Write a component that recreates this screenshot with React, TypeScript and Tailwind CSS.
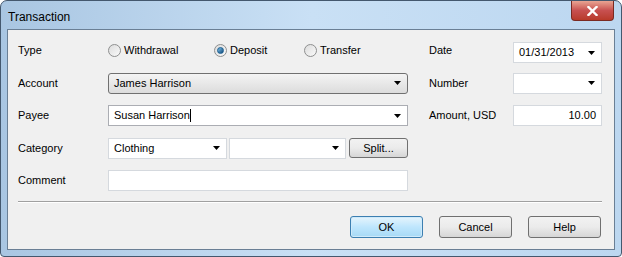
import React from 'react'

const font = { fontFamily: '"Liberation Sans", Arial, sans-serif' }

function Arrow() {
    return (
        <svg width="7" height="4" viewBox="0 0 7 4" className="shrink-0">
            <path d="M0 0h7L3.5 4z" fill="#000" />
        </svg>
    )
}

function Radio({ label, checked }: { label: string; checked?: boolean }) {
    return (
        <div className="flex items-center gap-[3px]">
            <span className="w-[13px] h-[13px] rounded-full border border-[#8e8f8f] bg-gradient-to-br from-[#dcdcdc] to-[#fafafa] flex items-center justify-center">
                {checked && <span className="w-[7px] h-[7px] rounded-full bg-gradient-to-br from-[#7fc3ec] to-[#0d4a7a] border border-[#1a5d8f]" />}
            </span>
            <span>{label}</span>
        </div>
    )
}

function Combo({ value, gray, caret, className = '' }: { value?: string; gray?: boolean; caret?: boolean; className?: string }) {
    return (
        <div
            className={`h-[21px] flex items-center justify-between pl-[5px] pr-[6px] ${
                gray
                    ? 'border border-[#707070] rounded-[3px] bg-gradient-to-b from-[#f4f4f4] to-[#dcdcdc]'
                    : 'border border-[#d5d9de] bg-white'
            } ${className}`}
        >
            <span className="flex items-center">
                {value}
                {caret && <span className="w-px h-[13px] bg-black" />}
            </span>
            <Arrow />
        </div>
    )
}

function Btn({ label, primary }: { label: string; primary?: boolean }) {
    return (
        <div
            className={`w-[73px] h-[22px] rounded-[3px] border flex items-center justify-center ${
                primary
                    ? 'border-[#3c7fb1] bg-gradient-to-b from-[#e6f4fc] via-[#bee6fd] to-[#a7d9f5] shadow-[inset_0_0_0_1px_#cfeafa]'
                    : 'border-[#707070] bg-gradient-to-b from-[#f2f2f2] via-[#ebebeb] to-[#d6d6d6]'
            }`}
        >
            {label}
        </div>
    )
}

export default function App() {
    return (
        <div className="w-[622px] h-[257px] bg-white text-[11px] text-black" style={font}>
            <div className="w-full h-full rounded-t-[7px] rounded-b-[4px] border border-[#44586e] bg-gradient-to-r from-[#a9c6e2] via-[#c9e0f5] to-[#bcd7f0] flex flex-col px-[6px] pb-[6px]">
                <div className="h-[28px] flex items-start justify-between">
                    <span className="text-[12px] pt-[7px] pl-[1px]">Transaction</span>
                    <div className="w-[43px] h-[20px] mr-[1px] rounded-b-[4px] border border-t-0 border-[#7a2a22] bg-gradient-to-b from-[#e8a493] via-[#c75050] to-[#b83a2a] flex items-center justify-center">
                        <svg width="11" height="10" viewBox="0 0 11 10">
                            <path d="M1.5 1l8 8M9.5 1l-8 8" stroke="#fff" strokeWidth="2.4" strokeLinecap="square" />
                        </svg>
                    </div>
                </div>
                <div className="flex-1 border border-[#6a7f95] bg-[#f0f0f0] pt-[10px] pl-[10px] pr-[11px]">
                    <div className="grid grid-cols-[90px_300px_21px_84px_89px] grid-rows-[21px_21px_21px_21px_21px] gap-y-[11.5px]">
                        <div className="flex items-center">Type</div>
                        <div className="flex items-center">
                            <div className="w-[106px]"><Radio label="Withdrawal" /></div>
                            <div className="w-[90px]"><Radio label="Deposit" checked /></div>
                            <Radio label="Transfer" />
                        </div>
                        <div />
                        <div className="flex items-center">Date</div>
                        <Combo value="01/31/2013" className="mt-[2px]" />

                        <div className="flex items-center">Account</div>
                        <Combo value="James Harrison" gray />
                        <div />
                        <div className="flex items-center">Number</div>
                        <Combo />

                        <div className="flex items-center">Payee</div>
                        <Combo value="Susan Harrison" caret className="!border-[#abadb3]" />
                        <div />
                        <div className="flex items-center">Amount, USD</div>
                        <div className="h-[21px] border border-[#d5d9de] bg-white flex items-center justify-end pr-[5px]">10.00</div>

                        <div className="flex items-center">Category</div>
                        <div className="flex items-center gap-[2px]">
                            <Combo value="Clothing" className="w-[119px]" />
                            <Combo className="w-[117px]" />
                            <div className="ml-[1px] w-[59px] h-[20px] rounded-[3px] border border-[#707070] bg-gradient-to-b from-[#f2f2f2] via-[#ebebeb] to-[#d6d6d6] flex items-center justify-center">Split...</div>
                        </div>
                        <div />
                        <div />
                        <div />

                        <div className="flex items-center">Comment</div>
                        <div className="h-[21px] border border-[#d5d9de] bg-white" />
                    </div>
                    <div className="mt-[10px] mr-[1px] h-[2px] border-t border-[#a0a0a0] border-b border-b-white" />
                    <div className="mt-[13px] flex justify-end gap-[16px] pr-[2px]">
                        <Btn label="OK" primary />
                        <Btn label="Cancel" />
                        <Btn label="Help" />
                    </div>
                </div>
            </div>
        </div>
    )
}
